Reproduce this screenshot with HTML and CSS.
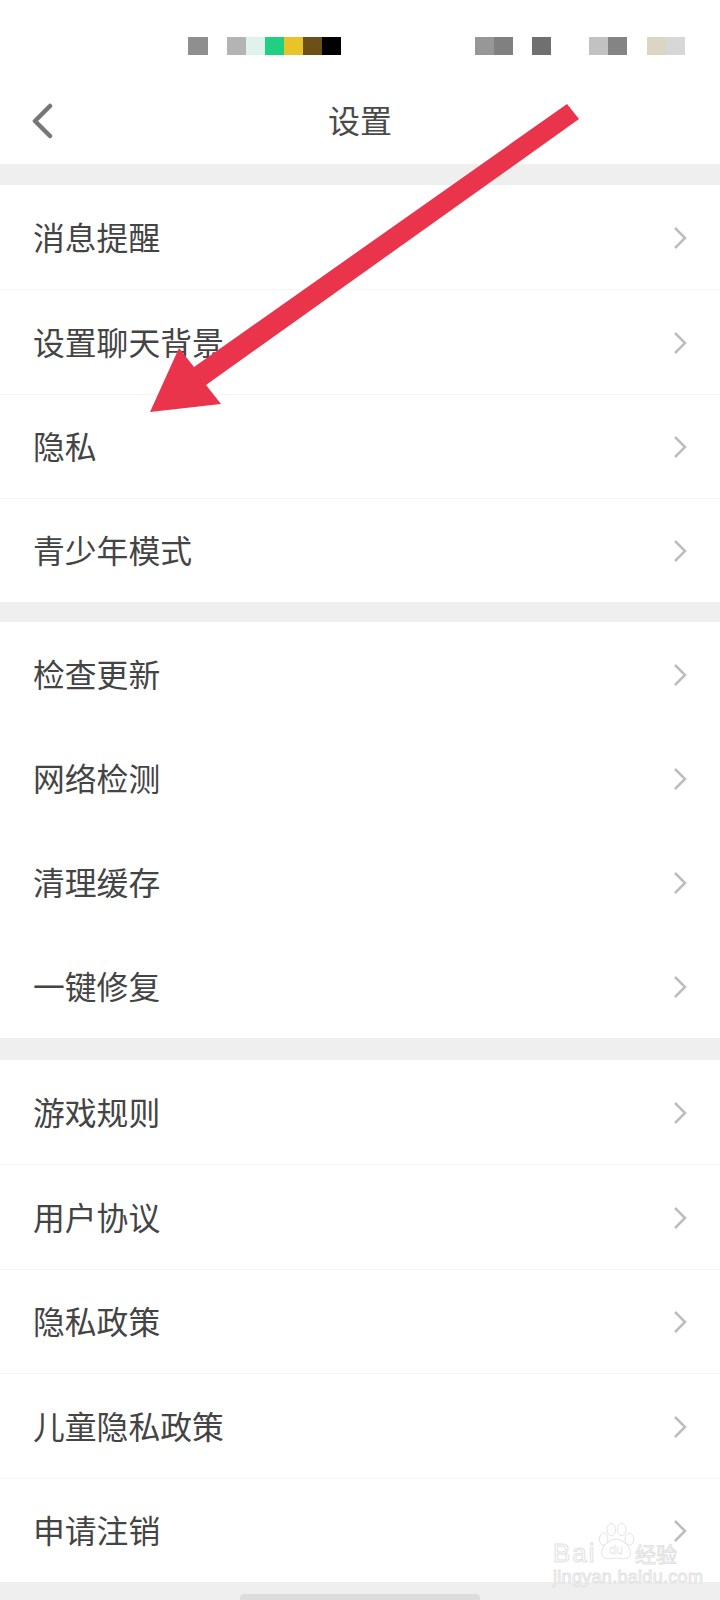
FILE: index.html
```html
<!DOCTYPE html>
<html lang="zh-CN">
<head>
    <meta charset="UTF-8">
    <meta name="viewport" content="width=device-width, initial-scale=1.0">
    <title>设置</title>
    <link rel="stylesheet" href="styles.css">
</head>
<body>
    <div class="page">
        <!-- status bar is pixelated in the screenshot -->
        <div class="status">
            <div class="blocks"><span class="b g1 wide"></span></div>
            <div class="blocks gap-s"><span class="b g2"></span><span class="b mint"></span><span class="b green"></span><span class="b yellow"></span><span class="b brown"></span><span class="b black"></span></div>
            <div class="blocks gap-l"><span class="b g3"></span><span class="b g4"></span></div>
            <div class="blocks gap-s"><span class="b g5"></span></div>
            <div class="blocks gap-m"><span class="b g6"></span><span class="b g7"></span></div>
            <div class="blocks gap-t"><span class="b tan"></span><span class="b g8"></span></div>
        </div>

        <div class="nav">
            <svg class="back" viewBox="0 0 22 36"><path d="M19 3 L4 18 L19 33"/></svg>
            <h1>设置</h1>
        </div>

        <div class="section lines first">
            <div class="row"><span>消息提醒</span><svg class="more" viewBox="0 0 14 24"><path d="M2 2 L12 12 L2 22"/></svg></div>
            <div class="row"><span>设置聊天背景</span><svg class="more" viewBox="0 0 14 24"><path d="M2 2 L12 12 L2 22"/></svg></div>
            <div class="row"><span>隐私</span><svg class="more" viewBox="0 0 14 24"><path d="M2 2 L12 12 L2 22"/></svg></div>
            <div class="row"><span>青少年模式</span><svg class="more" viewBox="0 0 14 24"><path d="M2 2 L12 12 L2 22"/></svg></div>
        </div>

        <div class="section second">
            <div class="row"><span>检查更新</span><svg class="more" viewBox="0 0 14 24"><path d="M2 2 L12 12 L2 22"/></svg></div>
            <div class="row"><span>网络检测</span><svg class="more" viewBox="0 0 14 24"><path d="M2 2 L12 12 L2 22"/></svg></div>
            <div class="row"><span>清理缓存</span><svg class="more" viewBox="0 0 14 24"><path d="M2 2 L12 12 L2 22"/></svg></div>
            <div class="row"><span>一键修复</span><svg class="more" viewBox="0 0 14 24"><path d="M2 2 L12 12 L2 22"/></svg></div>
        </div>

        <div class="section lines third">
            <div class="row"><span>游戏规则</span><svg class="more" viewBox="0 0 14 24"><path d="M2 2 L12 12 L2 22"/></svg></div>
            <div class="row"><span>用户协议</span><svg class="more" viewBox="0 0 14 24"><path d="M2 2 L12 12 L2 22"/></svg></div>
            <div class="row"><span>隐私政策</span><svg class="more" viewBox="0 0 14 24"><path d="M2 2 L12 12 L2 22"/></svg></div>
            <div class="row"><span>儿童隐私政策</span><svg class="more" viewBox="0 0 14 24"><path d="M2 2 L12 12 L2 22"/></svg></div>
            <div class="row"><span>申请注销</span><svg class="more" viewBox="0 0 14 24"><path d="M2 2 L12 12 L2 22"/></svg></div>
        </div>

        <div class="home-bar"><div class="home-pill"></div></div>

        <!-- red arrow drawn over the screenshot -->
        <svg class="arrow" viewBox="0 0 720 1600">
            <polygon points="567,104 579,119 206,385 221,404 150,412 179,348 194,367"/>
        </svg>

        <!-- watermark -->
        <div class="mark">
            <div class="mark-top">
                <span class="mark-bai">Bai</span>
                <svg class="paw" viewBox="0 0 40 40">
                    <ellipse cx="7" cy="17" rx="4.5" ry="6.5"/>
                    <ellipse cx="15" cy="7" rx="4.5" ry="6.5"/>
                    <ellipse cx="26" cy="7" rx="4.5" ry="6.5"/>
                    <ellipse cx="34" cy="17" rx="4.5" ry="6.5"/>
                    <path d="M20 17 C27 17 37 26 35 33 C33 40 25 37 20 37 C15 37 7 40 5 33 C3 26 13 17 20 17 Z"/>
                    <text x="20" y="33" text-anchor="middle">du</text>
                </svg>
                <span class="mark-cn">经验</span>
            </div>
            <div class="mark-url">jingyan.baidu.com</div>
        </div>
    </div>
</body>
</html>
```

FILE: styles.css
```css
* {
    box-sizing: border-box;
}
body {
    margin: 0;
    background: #efefef;
    font-family: "Noto Sans CJK SC", "Noto Sans", sans-serif;
    color: #444;
}
.page {
    position: relative;
    width: 720px;
    height: 1600px;
    overflow: hidden;
    background: #efefef;
}

.status {
    display: flex;
    height: 80px;
    padding: 37px 0 0 188px;
    background: #fff;
}
.blocks {
    display: flex;
    height: 18px;
}
.gap-s { margin-left: 19px; }
.gap-t { margin-left: 20px; }
.gap-m { margin-left: 38px; }
.gap-l { margin-left: 134px; }
.b {
    display: block;
    width: 19px;
    height: 18px;
}
.wide { width: 20px; }
.g1 { background: #8f8f8f; }
.g2 { background: #b4b4b4; }
.g3 { background: #979797; }
.g4 { background: #808080; }
.g5 { background: #707070; }
.g6 { background: #c2c2c2; }
.g7 { background: #848484; }
.g8 { background: #d7d7d7; }
.mint { background: #dff3ec; }
.green { background: #20cf82; }
.yellow { background: #e9c327; }
.brown { background: #6b5118; }
.black { background: #000; }
.tan { background: #dbd6c4; }

.nav {
    display: flex;
    align-items: center;
    justify-content: center;
    position: relative;
    height: 84px;
    background: #fff;
}
.nav h1 {
    margin: 0 0 6px;
    font-size: 32px;
    font-weight: 400;
    line-height: 78px;
    color: #4a4a4a;
}
.back {
    position: absolute;
    left: 31px;
    top: 23px;
    width: 22px;
    height: 36px;
    fill: none;
    stroke: #777;
    stroke-width: 4.5;
    stroke-linecap: round;
    stroke-linejoin: round;
}

.section {
    background: #fff;
}
.first { margin-top: 21px; }
.second { margin-top: 20px; }
.third { margin-top: 22px; }
.row {
    display: flex;
    align-items: center;
    justify-content: space-between;
    height: 104.25px;
    padding: 0 33px;
    font-size: 31.8px;
}
.second .row {
    height: 104px;
}
.third .row {
    height: 104.4px;
}
.row span {
    margin-bottom: 2px;
}
.lines .row + .row {
    border-top: 1px solid #f5f5f5;
}
.more {
    width: 14px;
    height: 24px;
    margin-top: 2px;
    fill: none;
    stroke: #bdbdbd;
    stroke-width: 2.5;
}

.home-bar {
    display: flex;
    justify-content: center;
    padding-top: 12px;
}
.home-pill {
    width: 240px;
    height: 8px;
    border-radius: 4px;
    background: #dcdcdc;
}

.arrow {
    position: absolute;
    left: 0;
    top: 0;
    width: 720px;
    height: 1600px;
    fill: #ea344c;
}

.mark {
    position: absolute;
    left: 553px;
    top: 1522px;
    width: 130px;
    color: #fff;
    -webkit-text-stroke: 1px #e2e2e2;
}
.mark-top {
    display: flex;
    align-items: flex-end;
    height: 46px;
}
.mark-bai {
    width: 44px;
    font-family: "Liberation Sans", sans-serif;
    font-size: 26px;
    letter-spacing: 2px;
    line-height: 30px;
}
.paw {
    width: 38px;
    height: 40px;
    margin-bottom: 6px;
    fill: #fff;
    stroke: #e2e2e2;
    stroke-width: 1;
}
.paw text {
    font-family: "Liberation Sans", sans-serif;
    font-size: 13px;
    stroke-width: 0.5;
}
.mark-cn {
    font-size: 21px;
    line-height: 30px;
}
.mark-url {
    font-family: "Liberation Sans", sans-serif;
    font-size: 18px;
    line-height: 18px;
    letter-spacing: 0.3px;
    white-space: nowrap;
}
```
